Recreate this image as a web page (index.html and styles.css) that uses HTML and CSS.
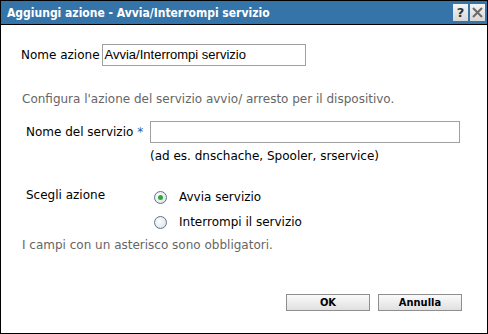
FILE: index.html
```html
<!DOCTYPE html>
<html lang="it">
<head>
    <meta charset="UTF-8">
    <title>Aggiungi azione - Avvia/Interrompi servizio</title>
    <link rel="stylesheet" href="styles.css">
</head>
<body>
    <div class="dialog">
        <div class="title-bar">
            <span class="title">Aggiungi azione - Avvia/Interrompi servizio</span>
            <div class="title-buttons">
                <span class="tb-btn">?</span>
                <span class="tb-btn">
                    <svg width="11" height="11" viewBox="0 0 11 11"><path d="M1 1 L10 10 M10 1 L1 10" stroke="#6a6a6a" stroke-width="2"/></svg>
                </span>
            </div>
        </div>

        <div class="content">
            <div class="row name-row">
                <label class="lbl">Nome azione</label>
                <div class="input action-input">Avvia/Interrompi servizio</div>
            </div>

            <p class="hint">Configura l'azione del servizio avvio/ arresto per il dispositivo.</p>

            <div class="grid">
                <label class="lbl">Nome del servizio <span class="req">*</span></label>
                <div class="input service-input"></div>
                <span></span>
                <span class="example">(ad es. dnschache, Spooler, srservice)</span>

                <label class="lbl choose">Scegli azione</label>
                <div class="radios">
                    <div class="radio-row">
                        <span class="radio checked"><span class="dot"></span></span>
                        <span>Avvia servizio</span>
                    </div>
                    <div class="radio-row">
                        <span class="radio"></span>
                        <span>Interrompi il servizio</span>
                    </div>
                </div>
            </div>

            <p class="hint required">I campi con un asterisco sono obbligatori.</p>

            <div class="actions">
                <button class="btn">OK</button>
                <button class="btn">Annulla</button>
            </div>
        </div>
    </div>
</body>
</html>
```

FILE: styles.css
```css
* {
    margin: 0;
    padding: 0;
    box-sizing: border-box;
}

body {
    width: 488px;
    height: 334px;
    font-family: 'DejaVu Sans', sans-serif;
    font-size: 12px;
    line-height: 14px;
    color: #000;
    background: #fff;
    overflow: hidden;
}

.dialog {
    width: 488px;
    height: 334px;
    border: 1px solid #000;
    display: flex;
    flex-direction: column;
}

.title-bar {
    height: 24px;
    background: #3574a8;
    border-bottom: 1px solid #000;
    display: flex;
    align-items: center;
    justify-content: space-between;
    padding: 0 2px 0 6px;
}

.title {
    font-family: 'DejaVu Sans Condensed', 'DejaVu Sans', sans-serif;
    font-weight: bold;
    font-size: 12px;
    color: #fff;
}

.title-buttons {
    display: flex;
    gap: 2px;
}

.tb-btn {
    width: 15px;
    height: 17px;
    background: linear-gradient(#f4f4f4, #d8d8d8);
    display: flex;
    align-items: center;
    justify-content: center;
    font-weight: bold;
    font-size: 13px;
    color: #333;
}

.content {
    flex: 1;
    padding: 19px 0 0 20px;
    display: flex;
    flex-direction: column;
}

.row {
    display: flex;
    align-items: center;
}

.lbl {
    color: #000;
}

.input {
    border: 1px solid #a0a0a0;
    height: 22px;
    background: #fff;
}

.action-input {
    width: 204px;
    margin-left: 2px;
    padding: 3px 0 0 2px;
    font-family: 'Liberation Sans', Arial, sans-serif;
    font-size: 13px;
}

.hint {
    color: #666;
    margin-top: 26px;
    padding-left: 1px;
}

.grid {
    display: grid;
    grid-template-columns: 124px 310px;
    align-items: center;
    margin-top: 15px;
    padding-left: 5px;
}

.req {
    color: #1f5fa8;
}

.example {
    margin-top: 6px;
}

.choose {
    align-self: start;
    margin-top: 25px;
}

.radios {
    margin-top: 27px;
    display: flex;
    flex-direction: column;
    gap: 11px;
    padding-left: 4px;
}

.radio-row {
    display: flex;
    align-items: center;
    gap: 12px;
}

.radio {
    width: 13px;
    height: 13px;
    border-radius: 50%;
    border: 1px solid #5a7496;
    background: radial-gradient(circle at 40% 40%, #fff, #dcdcdc);
    display: flex;
    align-items: center;
    justify-content: center;
}

.dot {
    width: 5px;
    height: 5px;
    border-radius: 50%;
    background: #2fa83a;
}

.required {
    margin-top: 9px;
}

.actions {
    display: flex;
    justify-content: flex-end;
    gap: 8px;
    margin-top: 42px;
    padding-right: 25px;
}

.btn {
    width: 84px;
    height: 17px;
    border: 1px solid #8e8e8e;
    background: linear-gradient(#fafafa, #e0e0e0);
    font-family: 'DejaVu Sans Condensed', 'DejaVu Sans', sans-serif;
    font-weight: bold;
    font-size: 11px;
    line-height: 13px;
    color: #000;
}
```
